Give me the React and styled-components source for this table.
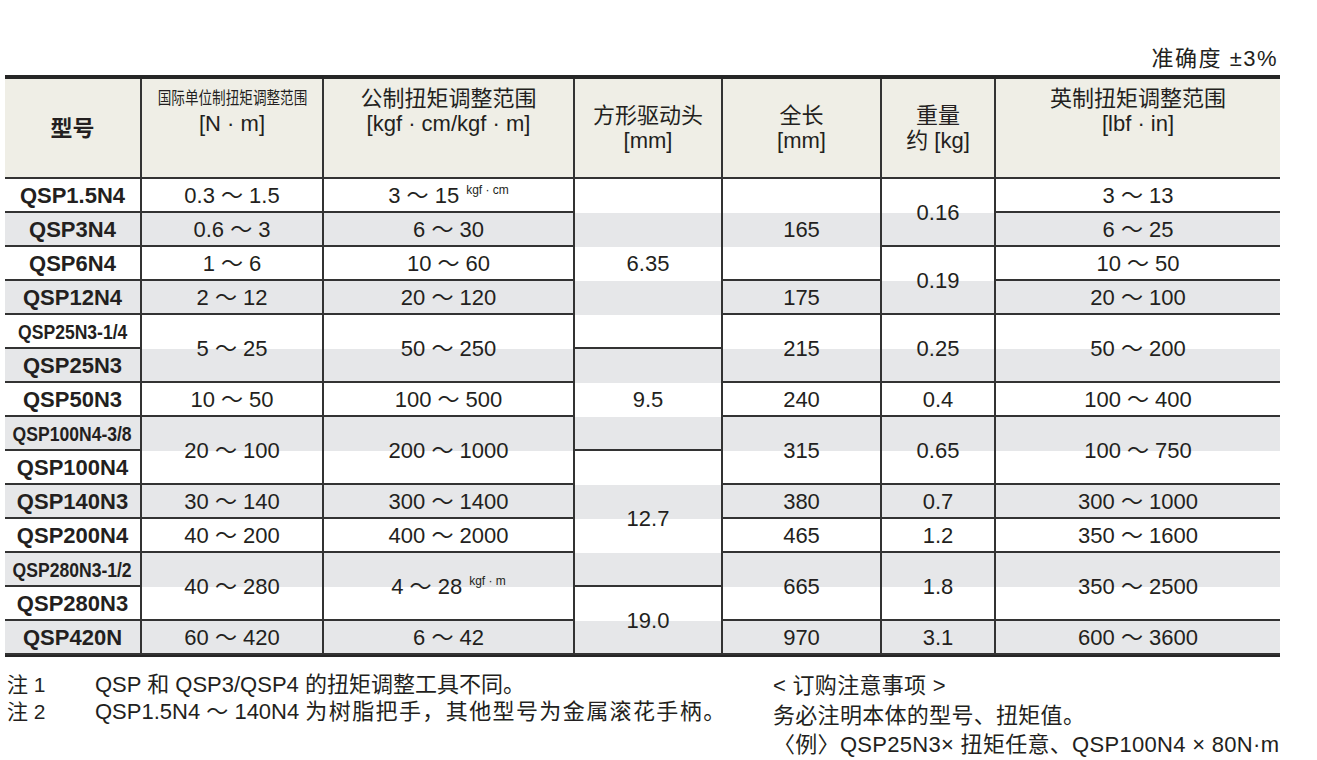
import React from 'react';
import styled, { createGlobalStyle } from 'styled-components';

const COLS = '137px 182px 251px 148px 159px 114px 284px';
const LINE = '#333';

const GlobalStyle = createGlobalStyle`
  body {
    margin: 0;
    background: #fff;
    color: #231f20;
    font-family: "Liberation Sans", "Noto Sans CJK SC", sans-serif;
  }
`;

const Page = styled.div`
  width: 1275px;
  padding: 47px 0 0 5px;
`;

const Accuracy = styled.div`
  text-align: right;
  font-size: 22px;
  letter-spacing: 1.5px;
  line-height: 24px;
  padding: 0 2px 4px 0;
`;

const Table = styled.div`
  border-top: 4px solid #262626;
`;

const HeadRow = styled.div`
  display: grid;
  grid-template-columns: ${COLS};
  height: 100px;
  box-sizing: border-box;
  background: #efeee6;
  border-bottom: 2px solid ${LINE};
`;

const HeadCell = styled.div`
  display: flex;
  flex-direction: column;
  align-items: center;
  justify-content: ${p => (p.$top ? 'flex-start' : 'center')};
  padding-top: ${p => (p.$top ? '7px' : '0')};
  border-right: ${p => (p.$last ? 'none' : `2px solid ${LINE}`)};
  font-size: 22px;
  line-height: 25px;
  white-space: nowrap;
  font-weight: ${p => (p.$bold ? 700 : 400)};
`;

const Squeezed = styled.span`
  display: inline-block;
  font-size: 17px;
  transform: scaleX(0.8);
`;

const Body = styled.div`
  display: grid;
  grid-template-columns: ${COLS};
  grid-template-rows: repeat(14, 34px);
  background: repeating-linear-gradient(to bottom, #fff 0 34px, #e6e7e9 34px 68px);
  border-bottom: 2px solid #262626;
`;

const Cell = styled.div`
  box-sizing: border-box;
  display: flex;
  align-items: center;
  justify-content: center;
  border-bottom: 2px solid ${LINE};
  border-right: ${p => (p.$last ? 'none' : `2px solid ${LINE}`)};
  font-size: 22px;
  line-height: 22px;
  font-weight: ${p => (p.$bold ? 700 : 400)};
  white-space: nowrap;
  padding-top: 1px;
`;

const Narrow = styled.span`
  display: inline-block;
  font-size: 19.5px;
  transform: scaleX(0.9);
`;

const Sup = styled.span`
  font-size: 12px;
  line-height: 0;
  vertical-align: 9px;
  margin-left: 7px;
`;

const Notes = styled.div`
  display: flex;
  margin-top: 14px;
  font-size: 22px;
`;

const LeftNotes = styled.div`
  width: 766px;
  padding-left: 2px;
  line-height: 27px;
`;

const NoteRow = styled.div`
  display: flex;
`;

const NoteLabel = styled.span`
  width: 88px;
  flex-shrink: 0;
  font-size: 21px;
`;

const NoteText = styled.span`
  letter-spacing: ${p => p.$spacing || 0}px;
  white-space: nowrap;
`;

const RightNotes = styled.div`
  line-height: 29.5px;
  letter-spacing: 0.3px;
  white-space: nowrap;
`;

const c = (col, t, s = 1, sup) => ({ col, t, s, sup });

const rows = [
  [c(0, 'QSP1.5N4'), c(1, '0.3 ～ 1.5'), c(2, '3 ～ 15', 1, 'kgf · cm'), c(3, '6.35', 5), c(4, '165', 3), c(5, '0.16', 2), c(6, '3 ～ 13')],
  [c(0, 'QSP3N4'), c(1, '0.6 ～ 3'), c(2, '6 ～ 30'), c(6, '6 ～ 25')],
  [c(0, 'QSP6N4'), c(1, '1 ～ 6'), c(2, '10 ～ 60'), c(5, '0.19', 2), c(6, '10 ～ 50')],
  [c(0, 'QSP12N4'), c(1, '2 ～ 12'), c(2, '20 ～ 120'), c(4, '175'), c(6, '20 ～ 100')],
  [c(0, 'QSP25N3-1/4'), c(1, '5 ～ 25', 2), c(2, '50 ～ 250', 2), c(4, '215', 2), c(5, '0.25', 2), c(6, '50 ～ 200', 2)],
  [c(0, 'QSP25N3'), c(3, '9.5', 3)],
  [c(0, 'QSP50N3'), c(1, '10 ～ 50'), c(2, '100 ～ 500'), c(4, '240'), c(5, '0.4'), c(6, '100 ～ 400')],
  [c(0, 'QSP100N4-3/8'), c(1, '20 ～ 100', 2), c(2, '200 ～ 1000', 2), c(4, '315', 2), c(5, '0.65', 2), c(6, '100 ～ 750', 2)],
  [c(0, 'QSP100N4'), c(3, '12.7', 4)],
  [c(0, 'QSP140N3'), c(1, '30 ～ 140'), c(2, '300 ～ 1400'), c(4, '380'), c(5, '0.7'), c(6, '300 ～ 1000')],
  [c(0, 'QSP200N4'), c(1, '40 ～ 200'), c(2, '400 ～ 2000'), c(4, '465'), c(5, '1.2'), c(6, '350 ～ 1600')],
  [c(0, 'QSP280N3-1/2'), c(1, '40 ～ 280', 2), c(2, '4 ～ 28', 2, 'kgf · m'), c(4, '665', 2), c(5, '1.8', 2), c(6, '350 ～ 2500', 2)],
  [c(0, 'QSP280N3'), c(3, '19.0', 2)],
  [c(0, 'QSP420N'), c(1, '60 ～ 420'), c(2, '6 ～ 42'), c(4, '970'), c(5, '3.1'), c(6, '600 ～ 3600')],
];

function App() {
  return (
    <Page>
      <GlobalStyle />
      <Accuracy>准确度 ±3%</Accuracy>
      <Table>
        <HeadRow>
          <HeadCell $bold>型号</HeadCell>
          <HeadCell $top>
            <Squeezed>国际单位制扭矩调整范围</Squeezed>
            <span>[N · m]</span>
          </HeadCell>
          <HeadCell $top>
            <span>公制扭矩调整范围</span>
            <span>[kgf · cm/kgf · m]</span>
          </HeadCell>
          <HeadCell>
            <span>方形驱动头</span>
            <span>[mm]</span>
          </HeadCell>
          <HeadCell>
            <span>全长</span>
            <span>[mm]</span>
          </HeadCell>
          <HeadCell>
            <span>重量</span>
            <span>约 [kg]</span>
          </HeadCell>
          <HeadCell $top $last>
            <span>英制扭矩调整范围</span>
            <span>[lbf · in]</span>
          </HeadCell>
        </HeadRow>
        <Body>
          {rows.map((row, r) =>
            row.map(cell => (
              <Cell
                key={`${r}-${cell.col}`}
                $bold={cell.col === 0}
                $last={cell.col === 6}
                style={{ gridRow: `${r + 1} / span ${cell.s}`, gridColumn: cell.col + 1 }}
              >
                {cell.col === 0 && cell.t.includes('-') ? (
                  <Narrow>{cell.t}</Narrow>
                ) : (
                  <span>
                    {cell.t}
                    {cell.sup && <Sup>{cell.sup}</Sup>}
                  </span>
                )}
              </Cell>
            ))
          )}
        </Body>
      </Table>
      <Notes>
        <LeftNotes>
          <NoteRow>
            <NoteLabel>注 1</NoteLabel>
            <NoteText>QSP 和 QSP3/QSP4 的扭矩调整工具不同。</NoteText>
          </NoteRow>
          <NoteRow>
            <NoteLabel>注 2</NoteLabel>
            <NoteText>
              QSP1.5N4 ～ 140N4 <NoteText $spacing={1.4}>为树脂把手，其他型号为金属滚花手柄。</NoteText>
            </NoteText>
          </NoteRow>
        </LeftNotes>
        <RightNotes>
          <div>&lt; 订购注意事项 &gt;</div>
          <div>务必注明本体的型号、扭矩值。</div>
          <div>〈例〉QSP25N3× 扭矩任意、QSP100N4 × 80N·m</div>
        </RightNotes>
      </Notes>
    </Page>
  );
}

export default App;
